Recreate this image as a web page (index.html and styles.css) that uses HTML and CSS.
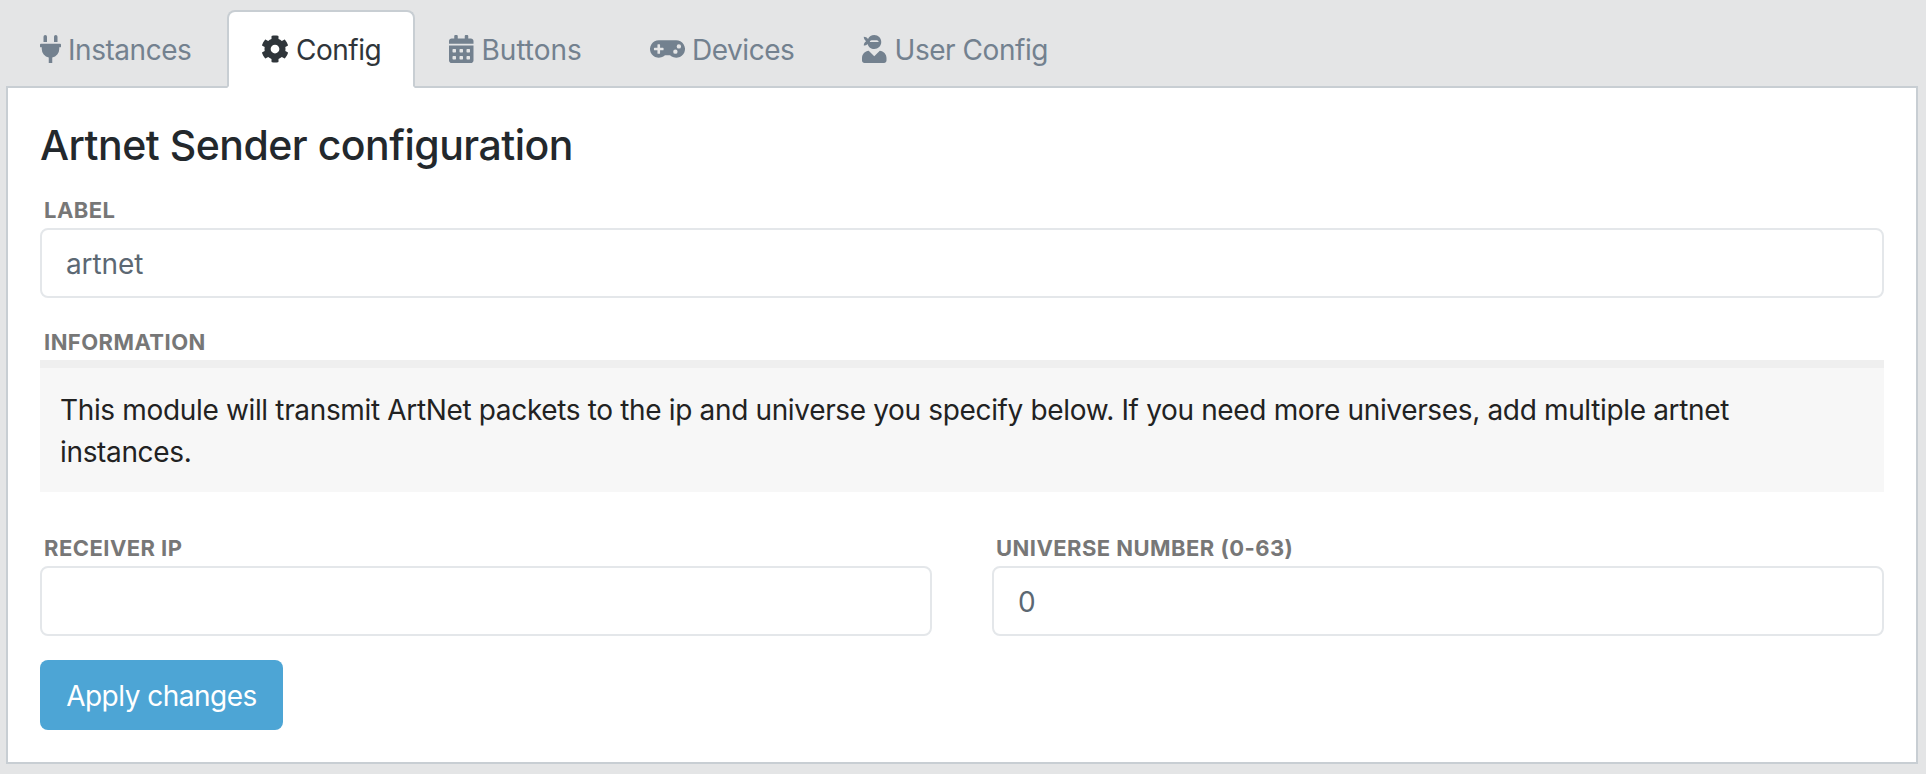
FILE: index.html
```html
<!DOCTYPE html>
<html lang="en">
<head>
<meta charset="utf-8">
<title>Artnet Sender configuration</title>
<link rel="stylesheet" href="styles.css">
</head>
<body>
<nav class="tabs">
  <a class="tab tab-instances"><svg class="icon" width="21" height="28" viewBox="0 0 384 512"><path d="M320,32a32,32,0,0,0-64,0v96h64Zm48,128H16A16,16,0,0,0,0,176v32a16,16,0,0,0,16,16H32v32A160.07,160.07,0,0,0,160,412.8V512h64V412.8A160.07,160.07,0,0,0,352,256V224h16a16,16,0,0,0,16-16V176A16,16,0,0,0,368,160ZM128,32a32,32,0,0,0-64,0v96h64Z"/></svg><span>Instances</span></a>
  <a class="tab tab-config active"><svg class="icon" width="28" height="28" viewBox="0 0 512 512"><path d="M487.4 315.7l-42.6-24.6c4.3-23.2 4.3-47 0-70.2l42.6-24.6c4.9-2.8 7.1-8.6 5.5-14-11.1-35.6-30-67.8-54.7-94.6-3.8-4.1-10-5.1-14.8-2.3L380.8 110c-17.9-15.4-38.5-27.3-60.8-35.1V25.8c0-5.6-3.9-10.5-9.4-11.7-36.7-8.2-74.3-7.8-109.2 0-5.5 1.2-9.4 6.1-9.4 11.7V75c-22.2 7.9-42.8 19.8-60.8 35.1L88.7 85.5c-4.9-2.8-11-1.9-14.8 2.3-24.7 26.7-43.6 58.9-54.7 94.6-1.7 5.4.6 11.2 5.5 14L67.3 221c-4.3 23.2-4.3 47 0 70.2l-42.6 24.6c-4.9 2.8-7.1 8.6-5.5 14 11.1 35.6 30 67.8 54.7 94.6 3.8 4.1 10 5.1 14.8 2.3l42.6-24.6c17.9 15.4 38.5 27.3 60.8 35.1v49.2c0 5.6 3.9 10.5 9.4 11.7 36.7 8.2 74.3 7.8 109.2 0 5.5-1.2 9.4-6.1 9.4-11.7v-49.2c22.2-7.9 42.8-19.8 60.8-35.1l42.6 24.6c4.9 2.8 11 1.9 14.8-2.3 24.7-26.7 43.6-58.9 54.7-94.6 1.5-5.5-.7-11.3-5.6-14.1zM256 336c-44.1 0-80-35.9-80-80s35.9-80 80-80 80 35.9 80 80-35.9 80-80 80z"/></svg><span>Config</span></a>
  <a class="tab tab-buttons"><svg class="icon" width="24.5" height="28" viewBox="0 0 448 512"><path fill-rule="evenodd" d="M0 464c0 26.500 21.500 48 48 48h352c26.500 0 48-21.500 48-48V192H0zM76 256h40a12 12 0 0 1 12 12v40a12 12 0 0 1-12 12H76a12 12 0 0 1-12-12v-40a12 12 0 0 1 12-12zM204 256h40a12 12 0 0 1 12 12v40a12 12 0 0 1-12 12h-40a12 12 0 0 1-12-12v-40a12 12 0 0 1 12-12zM332 256h40a12 12 0 0 1 12 12v40a12 12 0 0 1-12 12h-40a12 12 0 0 1-12-12v-40a12 12 0 0 1 12-12zM76 384h40a12 12 0 0 1 12 12v40a12 12 0 0 1-12 12H76a12 12 0 0 1-12-12v-40a12 12 0 0 1 12-12zM204 384h40a12 12 0 0 1 12 12v40a12 12 0 0 1-12 12h-40a12 12 0 0 1-12-12v-40a12 12 0 0 1 12-12zM332 384h40a12 12 0 0 1 12 12v40a12 12 0 0 1-12 12h-40a12 12 0 0 1-12-12v-40a12 12 0 0 1 12-12zM400 64h-48V16c0-8.800-7.200-16-16-16h-32c-8.800 0-16 7.200-16 16v48H160V16c0-8.800-7.200-16-16-16h-32c-8.800 0-16 7.200-16 16v48H48C21.500 64 0 85.500 0 112v48h448v-48c0-26.500-21.500-48-48-48z"/></svg><span>Buttons</span></a>
  <a class="tab tab-devices"><svg class="icon" width="35" height="28" viewBox="0 0 640 512"><path d="M480.07 96H160a160 160 0 1 0 114.24 272h91.5A160 160 0 1 0 480.07 96zM248 268a12 12 0 0 1-12 12h-52v52a12 12 0 0 1-12 12h-24a12 12 0 0 1-12-12v-52H84a12 12 0 0 1-12-12v-24a12 12 0 0 1 12-12h52v-52a12 12 0 0 1 12-12h24a12 12 0 0 1 12 12v52h52a12 12 0 0 1 12 12zm216 76a40 40 0 1 1 40-40 40 40 0 0 1-40 40zm64-96a40 40 0 1 1 40-40 40 40 0 0 1-40 40z"/></svg><span>Devices</span></a>
  <a class="tab tab-user"><svg class="icon" width="24.5" height="28" viewBox="0 0 448 512"><path d="M325.4 289.2L224 390.6 122.6 289.2C54 295.3 0 352.2 0 422.4v44.8C0 491.900 20.100 512 44.800 512h358.400c24.700 0 44.800-20.100 44.800-44.800v-44.800c0-70.200-54-127.100-122.600-133.200zM32 192c27.300 0 51.800-11.500 69.200-29.700 15.100 53.900 64 93.700 122.800 93.700 70.700 0 128-57.300 128-128S294.700 0 224 0c-50.400 0-93.600 29.400-114.500 71.800C92.100 47.800 64 32 32 32c0 33.400 17.100 62.800 43.100 80-26 17.200-43.100 46.600-43.100 80zm144-96h96c17.700 0 32 14.300 32 32H144c0-17.700 14.300-32 32-32z"/></svg><span>User Config</span></a>
</nav>
<main class="panel">
  <h4 class="title">Artnet Sender configuration</h4>
  <div class="field">
    <label class="label" for="label">Label</label>
    <input class="input" id="label" type="text" value="artnet">
  </div>
  <div class="field field-info">
    <div class="label">Information</div>
    <div class="info">This module will transmit ArtNet packets to the ip and universe you specify below. If you need more universes, add multiple artnet<br>instances.</div>
  </div>
  <div class="row">
    <div class="field">
      <label class="label label-ip" for="ip">Receiver IP</label>
      <input class="input" id="ip" type="text">
    </div>
    <div class="field">
      <label class="label label-universe" for="universe">Universe number (0-63)</label>
      <input class="input" id="universe" type="text" value="0">
    </div>
  </div>
  <button class="apply" type="button">Apply changes</button>
</main>
</body>
</html>
```

FILE: styles.css
```css
* { box-sizing: border-box; }
body {
  margin: 0;
  height: 774px;
  padding: 10px 8px 10px 6px;
  overflow: hidden;
  background: #e4e5e6;
  color: #23282c;
  font-family: Inter, "Liberation Sans", sans-serif;
  font-size: 28px;
  font-weight: 400;
  line-height: 42px;
}
.tabs { display: flex; height: 76px; }
.tab {
  display: flex;
  align-items: center;
  gap: 7px;
  height: 78px;
  padding: 0 0 1px 34px;
  color: #73818f;
  white-space: nowrap;
  letter-spacing: -0.45px;
}
.tab span { padding-top: 3px; }
.icon { flex: none; fill: currentColor; }
.tab-instances { width: 221px; }
.tab-config { width: 188px; letter-spacing: -0.5px; }
.tab-buttons { width: 201px; gap: 8px; letter-spacing: 0; }
.tab-devices { width: 212px; }
.tab-user { width: 240px; gap: 8px; }
.tab.active {
  position: relative;
  padding: 0 0 1px 32px;
  color: #2f353a;
  background: #fff;
  border: 2px solid #c8ced3;
  border-bottom-color: #fff;
  border-radius: 8px 8px 0 0;
}
.panel {
  height: 678px;
  padding: 32px;
  background: #fff;
  border: 2px solid #c8ced3;
}
.title {
  margin: 0;
  height: 76px;
  font-size: 41px;
  font-weight: 500;
  line-height: 50px;
  letter-spacing: -0.5px;
}
.field { flex: 1; }
.label {
  display: block;
  height: 32px;
  padding-left: 4px;
  color: #777;
  font-size: 22px;
  font-weight: 700;
  line-height: 28px;
  letter-spacing: 0.45px;
  text-transform: uppercase;
  white-space: nowrap;
}
.input {
  display: block;
  width: 100%;
  height: 70px;
  padding: 2px 24px 0;
  color: #5c6873;
  background: #fff;
  border: 2px solid #e4e7ea;
  border-radius: 8px;
  font: inherit;
  letter-spacing: -0.1px;
}
.field-info { margin-top: 30px; }
.info {
  height: 132px;
  padding: 21px 20px 19px;
  color: #222;
  background: #f7f7f7;
  border-top: 8px solid #efefef;
  white-space: nowrap;
  letter-spacing: -0.346px;
}
.row { display: flex; gap: 60px; margin-top: 42px; }
.apply {
  display: block;
  width: 243px;
  height: 70px;
  margin-top: 24px;
  padding: 2px 0 0;
  color: #fff;
  background: #4da5d5;
  border: 0;
  border-radius: 8px;
  font: inherit;
  letter-spacing: -0.5px;
}
```
